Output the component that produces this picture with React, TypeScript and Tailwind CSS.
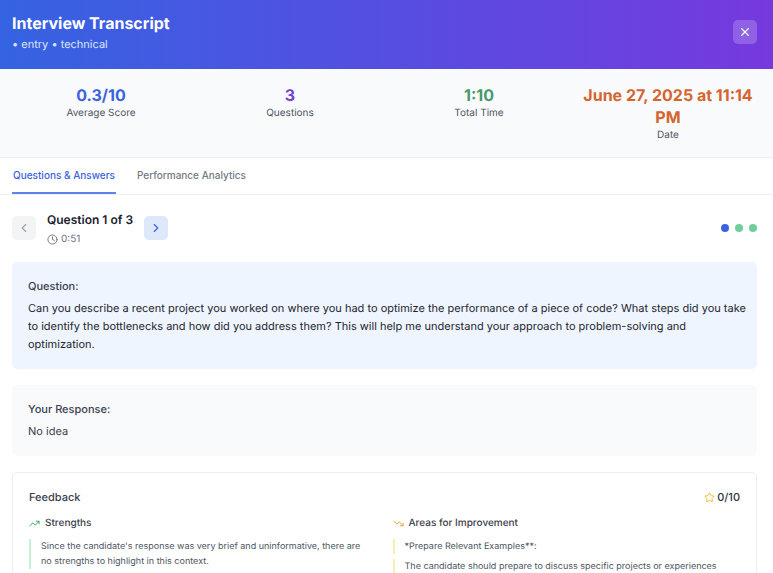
import { ChevronLeft, ChevronRight, Clock, Star, TrendingDown, TrendingUp, X } from 'lucide-react';

const stats = [
  { label: "Average Score", value: "0.3/10", color: "text-[#3b63dd]" },
  { label: "Questions", value: "3", color: "text-[#7541d8]" },
  { label: "Total Time", value: "1:10", color: "text-[#479a69]" },
  { label: "Date", value: "June 27, 2025 at 11:14 PM", color: "text-[#d5652f]" }
];

const questions = [
  { id: 1, color: "bg-[#3b63dd]" },
  { id: 2, color: "bg-[#6fcf9b]" },
  { id: 3, color: "bg-[#6fcf9b]" }
];

const strengths = [
  "Since the candidate's response was very brief and uninformative, there are no strengths to highlight in this context."
];

const improvements = [
  "*Prepare Relevant Examples**:",
  "The candidate should prepare to discuss specific projects or experiences"
];

function Header() {
  return (
    <header className="flex items-center justify-between bg-linear-to-r/srgb from-[#3563e2] to-[#7639de] pt-3 pr-4 pb-[17px] pl-3 text-white">
      <div>
        <h1 className="text-[16px] leading-[22px] font-bold">Interview Transcript</h1>
        <p className="mt-[2px] text-[11px] leading-[16px] text-[#dbe6fd]">• entry • technical</p>
      </div>
      <button type="button" aria-label="Close" className="flex size-6 items-center justify-center rounded-[5px] bg-white/20 text-white">
        <X className="size-[14px]" />
      </button>
    </header>
  );
}

function Stats() {
  return (
    <section className="grid grid-cols-4 gap-[11px] border-b border-[#eceef1] bg-[#f9fafc] pt-[15px] pr-4 pb-[14px] pl-3 text-center">
      {stats.map((stat) => (
        <div key={stat.label}>
          <div className={`text-[16px] leading-[22px] font-bold ${stat.color}`}>{stat.value}</div>
          <div className="text-[10px] leading-[15px] text-[#4e5562]">{stat.label}</div>
        </div>
      ))}
    </section>
  );
}

function Tabs() {
  return (
    <nav className="flex gap-5 border-b border-[#eceef1] pr-4 pl-3 text-[10px] leading-[14px] font-medium">
      <button type="button" className="border-b-2 border-[#5f82ea] px-px pt-[10px] pb-[10px] text-[#3b63dd]">
        Questions &amp; Answers
      </button>
      <button type="button" className="border-b-2 border-transparent px-px pt-[10px] pb-[10px] text-[#737984]">
        Performance Analytics
      </button>
    </nav>
  );
}

function QuestionNav() {
  return (
    <div className="flex items-center justify-between">
      <div className="flex items-center gap-[11px]">
        <button type="button" aria-label="Previous question" disabled className="flex size-6 items-center justify-center rounded-[5px] bg-[#f3f4f6] text-[#9ca3af]">
          <ChevronLeft className="size-[14px]" />
        </button>
        <div>
          <h2 className="text-[12px] leading-[19px] font-semibold text-[#1c222d]">Question 1 of 3</h2>
          <p className="mt-[3px] flex items-center gap-[3px] text-[10px] leading-[14px] text-[#6b7280]">
            <Clock className="size-[11px]" />
            0:51
          </p>
        </div>
        <button type="button" aria-label="Next question" className="flex size-6 items-center justify-center rounded-[5px] bg-[#dde8fb] text-[#3b63dd]">
          <ChevronRight className="size-[14px]" />
        </button>
      </div>
      <div className="flex gap-[6px]">
        {questions.map((question) => (
          <button key={question.id} type="button" aria-label={`Go to question ${question.id}`} className={`size-2 rounded-full ${question.color}`} />
        ))}
      </div>
    </div>
  );
}

function Feedback() {
  return (
    <section className="rounded-[5px] border border-[#eceef1] p-4">
      <div className="mb-[10px] flex items-center justify-between text-[11px] leading-[17px]">
        <h3 className="font-medium text-[#39404d]">Feedback</h3>
        <div className="flex items-center gap-[2px] font-medium text-[#2b323e]">
          <Star className="size-[11px] text-[#f0b429]" />
          0/10
        </div>
      </div>
      <div className="grid grid-cols-2 gap-4 leading-[15px]">
        <div>
          <h4 className="mb-2 flex items-center gap-[5px] text-[10px] font-medium text-[#39404d]">
            <TrendingUp className="size-[11px] text-[#35a468]" />
            Strengths
          </h4>
          <ul className="space-y-[5px] text-[9px] text-[#4e5562]">
            {strengths.map((item) => (
              <li key={item} className="border-l-2 border-[#c3f2d4] pr-2 pl-[10px]">{item}</li>
            ))}
          </ul>
        </div>
        <div>
          <h4 className="mb-2 flex items-center gap-[5px] text-[10px] font-medium text-[#39404d]">
            <TrendingDown className="size-[11px] text-[#ee9a33]" />
            Areas for Improvement
          </h4>
          <ul className="space-y-[5px] text-[9px] text-[#4e5562]">
            {improvements.map((item) => (
              <li key={item} className="border-l-2 border-[#faefaa] pr-2 pl-[10px]">{item}</li>
            ))}
          </ul>
        </div>
      </div>
    </section>
  );
}

export default function App() {
  return (
    <div className="h-screen overflow-hidden bg-white font-['Inter',sans-serif] [text-rendering:geometricPrecision]">
      <Header />
      <Stats />
      <Tabs />
      <main className="space-y-4 pt-[15px] pr-4 pb-4 pl-3">
        <QuestionNav />
        <section className="rounded-[5px] bg-[#eef5fe] py-4 pr-2 pl-4 text-[11px]">
          <h3 className="mb-1 leading-[17px] font-medium text-[#39404d]">Question:</h3>
          <p className="leading-[18px] text-[#1f2530]">
            Can you describe a recent project you worked on where you had to optimize the performance of a piece of code? What steps did you take to identify the bottlenecks and how did you address them? This will help me understand your approach to problem-solving and optimization.
          </p>
        </section>
        <section className="rounded-[5px] bg-[#f9fafc] p-4 text-[11px]">
          <h3 className="mb-1 leading-[17px] font-medium text-[#39404d]">Your Response:</h3>
          <p className="leading-[18px] text-[#39404d]">No idea</p>
        </section>
        <Feedback />
      </main>
    </div>
  );
}
